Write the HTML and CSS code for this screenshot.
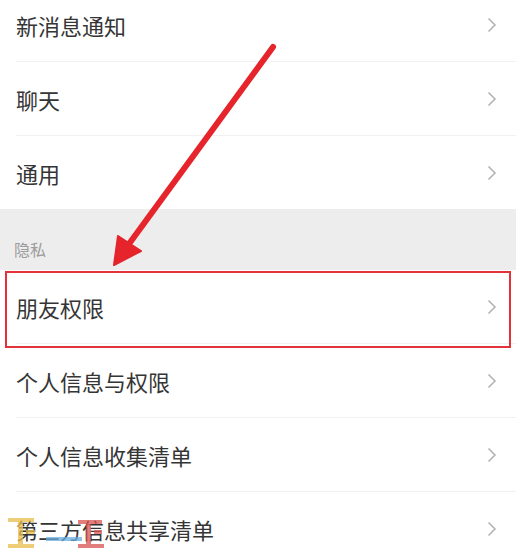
FILE: index.html
```html
<!DOCTYPE html>
<html lang="zh-CN">
<head>
  <meta charset="UTF-8" />
  <meta name="viewport" content="width=device-width, initial-scale=1.0" />
  <title>设置</title>
  <link rel="stylesheet" href="styles.css">
</head>
<body>
  <div class="list list-top">
    <div class="row"><span>新消息通知</span><svg class="chev" viewBox="0 0 10 16"><path d="M1.5 1.5 L8 8 L1.5 14.5" /></svg></div>
    <div class="row"><span>聊天</span><svg class="chev" viewBox="0 0 10 16"><path d="M1.5 1.5 L8 8 L1.5 14.5" /></svg></div>
    <div class="row last"><span>通用</span><svg class="chev" viewBox="0 0 10 16"><path d="M1.5 1.5 L8 8 L1.5 14.5" /></svg></div>
  </div>

  <div class="section">隐私</div>

  <div class="list">
    <div class="row"><span>朋友权限</span><svg class="chev" viewBox="0 0 10 16"><path d="M1.5 1.5 L8 8 L1.5 14.5" /></svg></div>
    <div class="row"><span>个人信息与权限</span><svg class="chev" viewBox="0 0 10 16"><path d="M1.5 1.5 L8 8 L1.5 14.5" /></svg></div>
    <div class="row"><span>个人信息收集清单</span><svg class="chev" viewBox="0 0 10 16"><path d="M1.5 1.5 L8 8 L1.5 14.5" /></svg></div>
    <div class="row last"><span>第三方信息共享清单</span><svg class="chev" viewBox="0 0 10 16"><path d="M1.5 1.5 L8 8 L1.5 14.5" /></svg></div>
  </div>

  <!-- annotation overlay -->
  <div class="highlight"></div>
  <svg class="arrow" width="516" height="552" viewBox="0 0 516 552">
    <line x1="273" y1="47" x2="126" y2="248" />
    <polygon points="114,265 118,236 141,251" />
  </svg>

  <!-- watermark logo -->
  <svg class="mark" width="110" height="40" viewBox="0 0 110 40">
    <g fill="#e9bd4c">
      <rect x="2" y="6" width="26" height="4" />
      <rect x="12" y="6" width="5" height="30" />
      <rect x="2" y="32" width="26" height="4" />
      <rect x="20" y="18" width="9" height="4" />
    </g>
    <rect x="40" y="25" width="36" height="4" fill="#6aaee0" />
    <g fill="#d9534f">
      <rect x="72" y="8" width="24" height="4" />
      <rect x="80" y="8" width="5" height="28" />
      <rect x="72" y="32" width="26" height="4" />
      <rect x="88" y="18" width="8" height="4" />
    </g>
  </svg>
</body>
</html>
```

FILE: styles.css
```css
body {
  margin: 0;
  background: #fff;
  font-family: "Noto Sans CJK SC", "Noto Sans", sans-serif;
  color: #353535;
  overflow: hidden;
}
.list-top {
  margin-top: -12px;
}
.row {
  height: 73px;
  display: flex;
  align-items: center;
  justify-content: space-between;
  margin-left: 16px;
  padding-right: 18px;
  font-size: 22px;
  border-bottom: 1px solid #f1f1f1;
}
.row.last {
  border-bottom: none;
}
.chev {
  width: 10px;
  height: 16px;
  fill: none;
  stroke: #b4b4b4;
  stroke-width: 1.6;
  margin-right: 1px;
}
.section {
  background: #ededed;
  height: 61px;
  box-sizing: border-box;
  padding: 28px 0 0 14px;
  font-size: 16px;
  color: #9c9c9c;
}
.highlight {
  position: absolute;
  left: 5px;
  top: 271px;
  width: 502px;
  height: 73px;
  border: 2px solid #e2323a;
}
.arrow {
  position: absolute;
  left: 0;
  top: 0;
}
.arrow line {
  stroke: #e5242c;
  stroke-width: 6;
  stroke-linecap: round;
}
.arrow polygon {
  fill: #e5242c;
  stroke: #e5242c;
  stroke-width: 2;
  stroke-linejoin: round;
}
.mark {
  position: absolute;
  left: 6px;
  top: 512px;
  opacity: 0.75;
}
```
